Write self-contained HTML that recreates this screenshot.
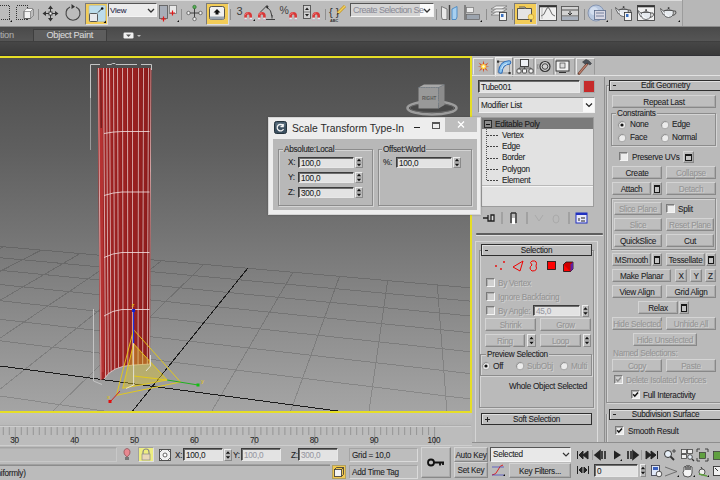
<!DOCTYPE html><html><head><meta charset="utf-8"><style>
*{margin:0;padding:0;box-sizing:border-box}
html,body{width:720px;height:480px;overflow:hidden;background:#bbbbbb;font-family:"Liberation Sans",sans-serif}
div,span,svg{position:absolute}
.t{font-size:8.2px;line-height:9px;letter-spacing:-0.25px;color:#1e1e26;white-space:nowrap;-webkit-text-stroke:0.08px #1e1e26}
.g{color:#959595;-webkit-text-stroke:0.1px #959595;text-shadow:1px 1px 0 #d2d2d2}
.g2{color:#9a9aa4;-webkit-text-stroke:0.1px #9a9aa4}
.btn{background:#bebebe;border:1px solid;border-color:#d4d4d4 #888888 #888888 #d4d4d4;box-shadow:inset -1px -1px 0 #aaaaaa}
.fld{background:#e3e3e3;border:1px solid;border-color:#3c3c3c #e8e8e8 #e8e8e8 #3c3c3c;box-shadow:inset 1px 1px 0 #6e6e6e}
.grp{border:1px solid;border-color:#8e8e8e #d4d4d4 #d4d4d4 #8e8e8e;box-shadow:1px 1px 0 #8e8e8e inset, 1px 1px 0 #d4d4d4}
</style></head><body>
<div style="left:0;top:0;width:720px;height:27px;background:#bcbcbc"></div>
<div style="left:0;top:0;width:682px;height:1px;background:#dcdcdc"></div>
<div style="left:682px;top:0;width:1px;height:26px;background:#9c9c9c"></div>
<div style="left:683px;top:0;width:37px;height:26px;background:#b7b7b7"></div>
<div style="left:0;top:26px;width:720px;height:1px;background:#8a8a8a"></div>
<div style="left:85px;top:3px;width:23px;height:22px;background:#f2cc58;border:1px solid #7a7a7a;border-bottom:1.5px solid #dedede;border-right:1px solid #dedede"></div>
<div style="left:206px;top:3px;width:23px;height:22px;background:#f2cc58;border:1px solid #7a7a7a;border-bottom:1.5px solid #dedede;border-right:1px solid #dedede"></div>
<div style="left:514px;top:3px;width:23px;height:22px;background:#f2cc58;border:1px solid #7a7a7a;border-bottom:1.5px solid #dedede;border-right:1px solid #dedede"></div>
<div style="left:108px;top:3px;width:49px;height:14px;background:#ececec;border:1px solid;border-color:#555 #f4f4f4 #f4f4f4 #555"></div>
<span class="t" style="left:110px;top:6.0px;font-size:8px;color:#2a2a50">View</span>
<svg style="left:147px;top:8px" width="8" height="6"><path d="M1 1L4 4L7 1" stroke="#333" stroke-width="1.3" fill="none"/></svg>
<div style="left:350px;top:3px;width:84px;height:14px;background:#d4d4d4;border:1px solid;border-color:#555 #f4f4f4 #f4f4f4 #555"></div>
<div style="left:420px;top:4px;width:13px;height:12px;background:#fafafa"></div>
<span class="t" style="left:353px;top:5.699999999999999px;font-size:9px;letter-spacing:-0.5px;color:#8c8c98;-webkit-text-stroke:0.05px #8c8c98">Create Selection Se</span>
<svg style="left:423px;top:8px" width="8" height="6"><path d="M1 1L4 4L7 1" stroke="#333" stroke-width="1.3" fill="none"/></svg>
<svg style="left:0;top:0" width="720" height="27"><path d="M38.5 9V20" stroke="#8e8e8e" stroke-width="1"/><path d="M181.5 9V20" stroke="#8e8e8e" stroke-width="1"/><path d="M230.5 9V20" stroke="#8e8e8e" stroke-width="1"/><path d="M325.5 9V20" stroke="#8e8e8e" stroke-width="1"/><path d="M436.5 9V20" stroke="#8e8e8e" stroke-width="1"/><path d="M486.5 9V20" stroke="#8e8e8e" stroke-width="1"/><path d="M512.5 9V20" stroke="#8e8e8e" stroke-width="1"/><path d="M584.5 9V20" stroke="#8e8e8e" stroke-width="1"/><path d="M611.5 9V20" stroke="#8e8e8e" stroke-width="1"/><rect x="-0.5" y="5.5" width="10" height="14" fill="none" stroke="#333" stroke-width="1" stroke-dasharray="1 1" shape-rendering="crispEdges"/><path d="M10 22L12 20V22Z" fill="#111"/><rect x="16.5" y="5.5" width="11" height="14" fill="none" stroke="#333" stroke-width="1" stroke-dasharray="1 1" shape-rendering="crispEdges"/><path d="M24 11.5L26.5 9H33V16L30.5 18.5H24Z" fill="#f2f2f2" stroke="#505050" stroke-width="0.9"/><path d="M30.5 11.5L33 9V16L30.5 18.5Z" fill="#bdbdbd"/><path d="M24 11.5L26.5 9H33L30.5 11.5Z" fill="#fafafa"/><path d="M24 11.5H30.5V18.5M30.5 11.5L33 9" stroke="#666" stroke-width="0.6" fill="none"/><g transform="translate(50.5,13.5)"><path d="M0 -5V5M-5 0H5" stroke="#333" stroke-width="1"/><path d="M0 -8L-2.5 -4.5H2.5ZM0 8L-2.5 4.5H2.5ZM-8 0L-4.5 -2.5V2.5ZM8 0L4.5 -2.5V2.5Z" fill="#333"/><rect x="-1.5" y="-1.5" width="3" height="3" fill="#fff" stroke="#333" stroke-width="0.9"/></g><path d="M76 7A7 7 0 1 1 70 7" stroke="#444" stroke-width="1.1" fill="none"/><path d="M71.5 4L75 6.8L71.5 9Z" fill="#333"/><rect x="89" y="5.5" width="16.5" height="16" rx="1" fill="#bcdcec" stroke="#9ab8c8" stroke-width="0.5"/><rect x="89.5" y="13.5" width="8" height="8" rx="0.8" fill="#e8e8ec" stroke="#4a4a4a" stroke-width="0.9"/><path d="M98 12.5L102 8.5" stroke="#222" stroke-width="0.9"/><circle cx="102.2" cy="8.5" r="1.3" fill="#111"/><path d="M103.5 23L106 20.5V23Z" fill="#111"/><rect x="159.5" y="5.5" width="8" height="13" fill="#a8aeb8" stroke="#555" stroke-width="0.8"/><rect x="169.5" y="5.5" width="7" height="8" fill="#e8e8e8" stroke="#777" stroke-width="0.8"/><path d="M163.5 16.5V21.5M161 19H166M172.5 10.5V15.5M170 13H175" stroke="#e01818" stroke-width="1.2"/><path d="M177 22L179 20V22Z" fill="#111"/><path d="M194.5 7V19M188.5 13H200.5" stroke="#333" stroke-width="0.9"/><circle cx="194.5" cy="7" r="1.7" fill="#5ab05a" stroke="#2a702a" stroke-width="0.7"/><circle cx="188.5" cy="13" r="1.7" fill="#f4f4f4" stroke="#444" stroke-width="0.7"/><circle cx="200.5" cy="13" r="1.7" fill="#f4f4f4" stroke="#444" stroke-width="0.7"/><circle cx="194.5" cy="19" r="1.7" fill="#f4f4f4" stroke="#444" stroke-width="0.7"/><rect x="209.5" y="6.5" width="15" height="13" rx="2" fill="#f0f0f0" stroke="#444" stroke-width="0.9"/><rect x="210" y="16.5" width="14" height="3" fill="#9aa4b0"/><path d="M217 9L213.5 12.5H215.5V14.5H218.5V12.5H220.5Z" fill="#111"/><text x="236.5" y="14.5" font-size="11" fill="#404040" font-family="Liberation Sans">3</text><path d="M244.3 20.3V15.8A3.85 3.85 0 0 1 252.0 15.8V20.3H249.4V15.8A1.25 1.25 0 0 0 246.9 15.8V20.3Z" fill="#d83838"/><path d="M245.10000000000002 15A3 3 0 0 1 248.3 12.9" stroke="#f08080" stroke-width="0.8" fill="none"/><rect x="244.3" y="17.6" width="2.6" height="2.7" fill="#e8ecf0"/><rect x="249.4" y="17.6" width="2.6" height="2.7" fill="#e8ecf0"/><rect x="244.3" y="19.3" width="2.6" height="1" fill="#a8b0c0"/><rect x="249.4" y="19.3" width="2.6" height="1" fill="#a8b0c0"/><path d="M253 21L255 19V21Z" fill="#111"/><path d="M260.5 12L267.5 5M267 7Q271.5 10 272 16.5M266 19.5H275M272 15V18.5" stroke="#333" stroke-width="0.9" fill="none"/><path d="M265.5 6.5L268.5 6L267.5 9Z" fill="#222"/><path d="M258 20.3V15.8A3.85 3.85 0 0 1 265.7 15.8V20.3H263.1V15.8A1.25 1.25 0 0 0 260.6 15.8V20.3Z" fill="#d83838"/><path d="M258.8 15A3 3 0 0 1 262 12.9" stroke="#f08080" stroke-width="0.8" fill="none"/><rect x="258" y="17.6" width="2.6" height="2.7" fill="#e8ecf0"/><rect x="263.1" y="17.6" width="2.6" height="2.7" fill="#e8ecf0"/><rect x="258" y="19.3" width="2.6" height="1" fill="#a8b0c0"/><rect x="263.1" y="19.3" width="2.6" height="1" fill="#a8b0c0"/><text x="279.5" y="13.5" font-size="10.5" fill="#404040" font-family="Liberation Sans">%</text><path d="M289.3 20.3V15.8A3.85 3.85 0 0 1 297.0 15.8V20.3H294.40000000000003V15.8A1.25 1.25 0 0 0 291.90000000000003 15.8V20.3Z" fill="#d83838"/><path d="M290.1 15A3 3 0 0 1 293.3 12.9" stroke="#f08080" stroke-width="0.8" fill="none"/><rect x="289.3" y="17.6" width="2.6" height="2.7" fill="#e8ecf0"/><rect x="294.40000000000003" y="17.6" width="2.6" height="2.7" fill="#e8ecf0"/><rect x="289.3" y="19.3" width="2.6" height="1" fill="#a8b0c0"/><rect x="294.40000000000003" y="19.3" width="2.6" height="1" fill="#a8b0c0"/><rect x="303.5" y="5.5" width="7" height="13" fill="#d2d2d2" stroke="#444" stroke-width="0.8"/><path d="M305 10L307 7.5L309 10ZM305 14L307 16.5L309 14Z" fill="#222"/><path d="M303.5 12H310.5" stroke="#444" stroke-width="0.6"/><path d="M312.3 20.3V15.8A3.85 3.85 0 0 1 320.0 15.8V20.3H317.40000000000003V15.8A1.25 1.25 0 0 0 314.90000000000003 15.8V20.3Z" fill="#d83838"/><path d="M313.1 15A3 3 0 0 1 316.3 12.9" stroke="#f08080" stroke-width="0.8" fill="none"/><rect x="312.3" y="17.6" width="2.6" height="2.7" fill="#e8ecf0"/><rect x="317.40000000000003" y="17.6" width="2.6" height="2.7" fill="#e8ecf0"/><rect x="312.3" y="19.3" width="2.6" height="1" fill="#a8b0c0"/><rect x="317.40000000000003" y="19.3" width="2.6" height="1" fill="#a8b0c0"/><text x="329" y="16" font-size="11" fill="#333" font-family="Liberation Sans">{ }</text><path d="M338 13L345 6" stroke="#c89820" stroke-width="3"/><path d="M338 13L345 6" stroke="#f0d060" stroke-width="1.5"/><path d="M336.5 14.5L338 13L339 14Z" fill="#222"/><text x="330" y="21.5" font-size="3.8" fill="#333" font-family="Liberation Sans" font-weight="bold">ABC</text><path d="M441.5 6.5L447 9V19.5H442.5L441.5 17Z" fill="#e8e8e8" stroke="#666" stroke-width="0.8"/><path d="M449.5 5V20" stroke="#444" stroke-width="1.4"/><path d="M457 6.5L452 9V19.5H456L457 17Z" fill="#a8d0f0" stroke="#3a80c0" stroke-width="0.8"/><path d="M465 5V20" stroke="#444" stroke-width="1"/><rect x="466.5" y="7.5" width="7" height="5" fill="#ececec" stroke="#777" stroke-width="0.7"/><rect x="466.5" y="14.5" width="13" height="5" fill="#9ca4ae" stroke="#666" stroke-width="0.7"/><path d="M480 22L482 20V22Z" fill="#111"/><path d="M491 9L496 6H507L502 9Z" fill="#f0f0f0" stroke="#666" stroke-width="0.6"/><path d="M491 12L496 9H507L502 12Z" fill="#f0f0f0" stroke="#666" stroke-width="0.6"/><path d="M491 15L496 12H505L500 15Z" fill="#f0f0f0" stroke="#666" stroke-width="0.6"/><rect x="499.5" y="12.5" width="7" height="8" fill="#f4f4f4" stroke="#333" stroke-width="0.8"/><rect x="501" y="14" width="2.5" height="3" fill="#3a70c0"/><path d="M517.5 8.5H531.5V19.5H517.5Z" fill="#e4e4e4" stroke="#444" stroke-width="0.9"/><path d="M519 7H525L526 8.5" stroke="#444" stroke-width="0.8" fill="#ccc"/><circle cx="531" cy="17" r="2.8" fill="#f8e070" stroke="#d0a030" stroke-width="0.7"/><rect x="530" y="19.5" width="2" height="2.5" fill="#666"/><rect x="539.5" y="5.5" width="17" height="15" fill="#f0f0f0" stroke="#444" stroke-width="0.9"/><rect x="539.5" y="5.5" width="17" height="1.8" fill="#333"/><path d="M541 16Q544 16 546 10Q548 5 550 10Q552 16 555 16" stroke="#444" stroke-width="0.8" fill="none"/><path d="M542 8V19" stroke="#999" stroke-width="0.6"/><rect x="561.5" y="6.5" width="17" height="14" fill="#d2d2d2" stroke="#555" stroke-width="0.9"/><path d="M562 10H578M562 16H578" stroke="#444" stroke-width="0.9"/><rect x="562" y="16.5" width="16" height="3.5" fill="#a8b0bc"/><path d="M570 11V14M568 13L570 15L572 13" stroke="#222" stroke-width="0.9" fill="none"/><circle cx="596" cy="13" r="8" fill="#b8c8e0" stroke="#7a8aa8" stroke-width="0.8"/><circle cx="594" cy="11" r="4" fill="#e4ecf8" opacity="0.6"/><rect x="594.5" y="10.5" width="11" height="9" fill="#d8d8e4" stroke="#5a6a88" stroke-width="0.8"/><path d="M596 13H604M596 16H604" stroke="#5a6a88" stroke-width="0.8"/><path d="M606 22L608 20V22Z" fill="#111"/><g transform="translate(615,5) scale(1)"><path d="M4 4.5Q2.5 11 8.5 11.5Q14.5 11 13 4.5Z" fill="#e6eaee" stroke="#4a4a4a" stroke-width="0.8"/><path d="M4.5 6L0.5 2.5L1 4.5L3.5 9" stroke="#4a4a4a" stroke-width="0.8" fill="#e6eaee"/><path d="M13 5Q16.5 4 16 7Q15.5 9 12.5 9.5" stroke="#4a4a4a" stroke-width="0.9" fill="none"/><path d="M5 4.5Q8.5 2 12 4.5Z" fill="#d8dce0" stroke="#4a4a4a" stroke-width="0.7"/><rect x="7.8" y="1.3" width="1.6" height="1.6" fill="#333"/><path d="M5 7Q6 10 9 10.5" stroke="#fff" stroke-width="1" fill="none" opacity="0.8"/></g><rect x="624.5" y="12.5" width="7" height="8" fill="#f4f4f4" stroke="#333" stroke-width="0.8"/><rect x="626" y="14" width="2.5" height="3" fill="#3a70c0"/><rect x="637.5" y="5.5" width="17" height="15" fill="#f0f0f0" stroke="#444" stroke-width="0.9"/><rect x="637.5" y="5.5" width="17" height="1.8" fill="#333"/><g transform="translate(637.5,8) scale(1)"><path d="M4 4.5Q2.5 11 8.5 11.5Q14.5 11 13 4.5Z" fill="#e6eaee" stroke="#4a4a4a" stroke-width="0.8"/><path d="M4.5 6L0.5 2.5L1 4.5L3.5 9" stroke="#4a4a4a" stroke-width="0.8" fill="#e6eaee"/><path d="M13 5Q16.5 4 16 7Q15.5 9 12.5 9.5" stroke="#4a4a4a" stroke-width="0.9" fill="none"/><path d="M5 4.5Q8.5 2 12 4.5Z" fill="#d8dce0" stroke="#4a4a4a" stroke-width="0.7"/><rect x="7.8" y="1.3" width="1.6" height="1.6" fill="#333"/><path d="M5 7Q6 10 9 10.5" stroke="#fff" stroke-width="1" fill="none" opacity="0.8"/></g><g transform="translate(660,6) scale(1)"><path d="M4 4.5Q2.5 11 8.5 11.5Q14.5 11 13 4.5Z" fill="#e6eaee" stroke="#4a4a4a" stroke-width="0.8"/><path d="M4.5 6L0.5 2.5L1 4.5L3.5 9" stroke="#4a4a4a" stroke-width="0.8" fill="#e6eaee"/><path d="M13 5Q16.5 4 16 7Q15.5 9 12.5 9.5" stroke="#4a4a4a" stroke-width="0.9" fill="none"/><path d="M5 4.5Q8.5 2 12 4.5Z" fill="#d8dce0" stroke="#4a4a4a" stroke-width="0.7"/><rect x="7.8" y="1.3" width="1.6" height="1.6" fill="#333"/><path d="M5 7Q6 10 9 10.5" stroke="#fff" stroke-width="1" fill="none" opacity="0.8"/></g><path d="M678 22L680 20V22Z" fill="#111"/></svg>
<div style="left:0px;top:27px;width:720px;height:14px;background:linear-gradient(#4a4a4a,#555555)"></div>
<div style="left:33px;top:29px;width:74px;height:12px;background:#5d5d5d;border:1px solid #3e3e3e;border-bottom:none"></div>
<span class="t" style="left:-4.5px;top:30.5px;color:#aaaaaa;font-size:9.2px;letter-spacing:-0.2px;-webkit-text-stroke:0.1px #aaaaaa">ction</span>
<span class="t" style="left:46.5px;top:30.5px;color:#d8d8d8;font-size:9.2px;letter-spacing:-0.3px;-webkit-text-stroke:0.1px #d8d8d8">Object Paint</span>
<svg style="left:122px;top:31px" width="20" height="9"><rect x="1.5" y="1.5" width="10" height="6" rx="1.2" fill="#f0f0f0"/><path d="M4 3.5H9L6.5 6Z" fill="#555"/><path d="M15 4H19L17 6Z" fill="#bdbdbd"/></svg>
<div style="left:41px;top:41px;width:720px;height:0px;"></div>
<div style="left:0px;top:41px;width:720px;height:15px;background:linear-gradient(#3a3a3a,#464646 8%,#3a3a3a 92%,#2c2c34)"></div>
<div style="left:0px;top:56px;width:472px;height:357px;background:#e6de26"></div>
<svg width="470" height="353" viewBox="0 58 470 353" style="left:0;top:58px">
<defs><linearGradient id="vg" x1="0" y1="0" x2="0" y2="1"><stop offset="0" stop-color="#4d4d4d"/><stop offset="0.025" stop-color="#4f4f4f"/><stop offset="0.26" stop-color="#5f5f5f"/><stop offset="0.487" stop-color="#737373"/><stop offset="0.6" stop-color="#7e7e7e"/><stop offset="0.949" stop-color="#a0a0a0"/><stop offset="1" stop-color="#a4a4a4"/></linearGradient></defs>
<rect x="0" y="58" width="470" height="353" fill="url(#vg)"/>
<path d="M-33.4 243.5L-849.5 583.1M3.4 246.8L-776.9 606.2M41.2 250.1L-698.2 631.2M80.1 253.5L-612.6 658.4M120.2 257.1L-519.1 688.2M161.4 260.7L-416.5 720.8M203.9 264.4L-303.5 756.7M292.9 272.3L-39.1 840.7M339.5 276.4L116.8 890.3M387.6 280.6L292.6 946.1M437.3 285.0L492.4 1009.6M488.7 289.5L721.4 1082.4M541.8 294.2L986.5 1166.7M596.7 299.0L1297.0 1265.4M-849.5 583.1L1297.0 1265.4M-704.8 522.9L1103.6 998.5M-589.7 475.1L980.1 828.1M-496.0 436.1L894.4 709.8M-418.2 403.7L831.4 622.9M-352.6 376.4L783.2 556.4M-296.6 353.1L745.1 503.8M-205.7 315.3L688.7 426.0M-168.4 299.8L667.2 396.4M-135.3 286.0L649.0 371.2M-105.8 273.7L633.2 349.4M-79.2 262.6L619.5 330.5M-55.2 252.6L607.4 313.8M-33.4 243.5L596.7 299.0" stroke="#000" stroke-width="1" fill="none" opacity="0.15" shape-rendering="crispEdges"/>
<path d="M247.7 268.3L-178.4 796.4M-248.1 332.9L714.2 461.2" stroke="#1c1c1c" stroke-width="1" fill="none" shape-rendering="crispEdges"/>
<defs><linearGradient id="tg" x1="0" y1="0" x2="1" y2="0"><stop offset="0" stop-color="#a82828"/><stop offset="0.3" stop-color="#9e2222"/><stop offset="0.7" stop-color="#982020"/><stop offset="1" stop-color="#8c1c1c"/></linearGradient></defs>
<clipPath id="tc"><path d="M97.5 68L151.5 68L150 364L133 365Q112 366 104 379L100 380Z"/></clipPath>
<path d="M97.5 68L151.5 68L150 364L133 365Q112 366 104 379L100 380Z" fill="url(#tg)"/>
<g clip-path="url(#tc)">
<path d="M102.3 68L103.3 68L105.4 372L104.4 372ZM105.3 68L106.3 68L108.1 372L107.2 372ZM108.3 68L109.3 68L110.9 372L110.0 372ZM112.3 68L113.3 68L114.6 372L113.7 372ZM116.3 68L117.3 68L118.3 372L117.4 372ZM121.3 68L122.3 68L123.0 372L122.0 372ZM126.3 68L127.3 68L127.6 372L126.7 372ZM131.3 68L132.3 68L132.2 372L131.3 372ZM137.3 68L138.3 68L137.8 372L136.9 372ZM142.3 68L143.3 68L142.4 372L141.5 372ZM147.3 68L148.3 68L147.0 372L146.1 372ZM149.8 68L150.8 68L149.4 372L148.4 372Z" fill="#6a0c0c" opacity="0.35"/>
<path d="M99.5 68H102.5L104 372H101Z" fill="#c03a3a" opacity="0.6"/>
<path d="M100 70H101.5L102 128H100.5Z" fill="#3a0808" opacity="0.5"/>
<path d="M98.5 68L100.9 380M103.5 68L105.6 380M106.5 68L108.3 380M109.5 68L111.1 380M113.5 68L114.8 380M117.5 68L118.5 380M122.5 68L123.1 380M127.5 68L127.8 380M132.5 68L132.4 380M138.5 68L138.0 380M143.5 68L142.6 380M148.5 68L147.2 380M151.0 68L149.5 380" stroke="#f0d8d8" stroke-width="0.85" opacity="0.85" fill="none"/>
<path d="M104 133.5L113 132.1L122 131.5H149.5M104 195.5L113 193.1L122 192H149.5M104 257.5L113 254.0L122 252.5H149.5M104 316.0L113 311.4L122 309.5H149.5M97.5 67.5H112L114 65.5H136.5L137.5 67.5H151" stroke="#f4e4e4" stroke-width="0.85" fill="none" opacity="0.95"/>
</g>
<path d="M104 379Q112 366 133 365L150 364" stroke="#f4e0e0" stroke-width="0.9" fill="none" opacity="0.7"/>
<path d="M90.5 98V64.5H100M107 64.5H111L112.5 63.5H115L116 64.5H137M141 64.5H151.5V70M93.5 309V381L102 384.5" stroke="#c4c4c4" stroke-width="1" fill="none"/>
<path d="M90.5 98V150" stroke="#999" stroke-width="1"/>
<path d="M133.6 343.8L122.7 388.3L167.2 380Z" fill="#e0c830" opacity="0.42"/>
<path d="M133.6 329.7L116.4 395.3L180.5 382ZM133.6 343.8L122.7 388.3L167.2 380ZM133.6 376L167.2 380" stroke="#e8cc10" stroke-width="0.9" fill="none"/>
<path d="M133.6 343V385L126 388.5M150.5 355V366L146 371" stroke="#f0f0f0" stroke-width="0.9" fill="none" opacity="0.85"/>
<path d="M133.6 310V343" stroke="#2030e0" stroke-width="1.2"/><rect x="132.1" y="309" width="3" height="3" fill="#1020d0"/>
<path d="M120 391L110 402" stroke="#d02020" stroke-width="1"/>
<path d="M167.2 380L198 385" stroke="#20b020" stroke-width="1"/>
<rect x="108.5" y="400" width="3" height="3" fill="#e01010"/>
<rect x="196.5" y="383.5" width="3" height="3" fill="#10c010"/>
<text x="131.5" y="307" font-size="6" fill="#e8c800" font-family="Liberation Sans">z</text>
<text x="107" y="399" font-size="6" fill="#e8c800" font-family="Liberation Sans">x</text>
<text x="201" y="383" font-size="6" fill="#e8c800" font-family="Liberation Sans">y</text>
<ellipse cx="432" cy="108" rx="24.5" ry="6.5" fill="#474747" stroke="#9c9c9c" stroke-width="2.6"/>
<ellipse cx="432" cy="108" rx="22" ry="4.5" fill="none" stroke="#707070" stroke-width="0.8"/>
<path d="M418.5 87.5L424 84.5H444.5L438.5 87.5Z" fill="#a8a8a8"/>
<path d="M418.5 87.5H438.5V108.5H418.5Z" fill="#999"/>
<path d="M438.5 87.5L444.5 84.5V105L438.5 108.5Z" fill="#8c8c8c"/>
<path d="M418.5 87.5H438.5V108.5M438.5 87.5L444.5 84.5" stroke="#6a7888" stroke-width="0.6" stroke-dasharray="1.5 1" fill="none"/>
<text x="422" y="99.5" font-size="4.6" fill="#5a5a5a" font-family="Liberation Sans" font-weight="bold">RIGHT</text>
</svg>
<div style="left:472px;top:56px;width:248px;height:387px;background:#bababa"></div>
<div style="left:473px;top:58px;width:21px;height:17px;background:#b8b8b8;border:1px solid;border-color:#e8e8e8 #9a9a9a #bababa #e8e8e8"></div>
<div style="left:495px;top:57px;width:18px;height:20px;background:#d2d2d2;border:1px solid;border-color:#f0f0f0 #8a8a8a #bababa #f0f0f0"></div>
<div style="left:514px;top:58px;width:20px;height:17px;background:#b8b8b8;border:1px solid;border-color:#e8e8e8 #9a9a9a #bababa #e8e8e8"></div>
<div style="left:535px;top:58px;width:19px;height:17px;background:#b8b8b8;border:1px solid;border-color:#e8e8e8 #9a9a9a #bababa #e8e8e8"></div>
<div style="left:555px;top:58px;width:20px;height:17px;background:#b8b8b8;border:1px solid;border-color:#e8e8e8 #9a9a9a #bababa #e8e8e8"></div>
<div style="left:576px;top:58px;width:19px;height:17px;background:#b8b8b8;border:1px solid;border-color:#e8e8e8 #9a9a9a #bababa #e8e8e8"></div>
<svg style="left:473px;top:58px" width="122" height="18"><g transform="translate(10.5,8.5)"><path d="M0 -6L1 -1.5L5 -4L2 0L6 0L2 1L4.5 5L0.8 2L0 6L-0.8 2L-4.5 5L-2 1L-6 0L-2 0L-5 -4L-1 -1.5Z" fill="#d84a20"/><circle r="2.6" fill="#ffd040"/><circle r="1.2" fill="#fffbe0"/></g><path d="M25 3.5H36.5V15H25Z" stroke="#8a8a8a" stroke-width="0.8" fill="none"/><rect x="24" y="2.5" width="2.2" height="2.2" fill="#333"/><rect x="35.5" y="14" width="2.2" height="2.2" fill="#333"/><path d="M27.5 13.5Q28 5 36 4.5" stroke="#2f6cb8" stroke-width="4.6" fill="none" stroke-linecap="round"/><path d="M27.5 13.5Q28 5 36 4.5" stroke="#8cc4ee" stroke-width="2.6" fill="none" stroke-linecap="round"/><path d="M28.6 11Q29.5 6.5 34 5.6" stroke="#e0f0fc" stroke-width="0.9" fill="none"/><rect x="47.5" y="1.5" width="8" height="7" fill="#eef0f4" stroke="#333" stroke-width="0.9"/><path d="M51.5 8.5V10M46 10H58M46 10V11M51.5 10V11M58 10V11" stroke="#444" stroke-width="0.7" fill="none"/><rect x="44" y="11" width="4" height="4" rx="1" fill="#f4f4f4" stroke="#333" stroke-width="0.8"/><rect x="49.5" y="11" width="4" height="4" rx="1" fill="#f4f4f4" stroke="#333" stroke-width="0.8"/><rect x="56" y="11" width="4" height="4" rx="1" fill="#f4f4f4" stroke="#333" stroke-width="0.8"/><circle cx="72" cy="8.5" r="5" fill="#cfcfcf" stroke="#333" stroke-width="1.2"/><circle cx="72" cy="8.5" r="2.8" fill="none" stroke="#333" stroke-width="0.9"/><path d="M65 6Q64 8.5 65 11" stroke="#888" fill="none"/><rect x="83" y="3" width="13" height="10" fill="#f2f2f2" stroke="#333" stroke-width="1"/><rect x="87" y="5" width="5" height="5" fill="#ddd" stroke="#444" stroke-width="0.7"/><path d="M86 14.5H93" stroke="#333" stroke-width="1"/><path d="M106 15.5L114 6" stroke="#6a4030" stroke-width="2.6" stroke-linecap="round"/><path d="M106 15.5L114 6" stroke="#c08070" stroke-width="1.2"/><path d="M109.5 4L113 1.5Q116 2 118.5 5.5L117 7L114 5L112.5 6.5Z" fill="#4a5058" stroke="#333" stroke-width="0.5"/></svg>
<div style="left:472px;top:75px;width:248px;height:1px;background:#e2e2e2"></div>
<div class="fld" style="left:478px;top:80px;width:102px;height:13px;"></div><span class="t" style="left:481px;top:82.8px;">Tube001</span>
<div style="left:583px;top:80px;width:12px;height:13px;background:#c62a2a;border:1px solid #a8a8a8"></div>
<div style="left:478px;top:97px;width:117px;height:16px;background:#e2e2e2;border:1px solid;border-color:#8c8c8c #f0f0f0 #f0f0f0 #8c8c8c"></div>
<div style="left:583px;top:98px;width:11px;height:14px;background:#f8f8f8"></div>
<svg style="left:585px;top:102px" width="8" height="6"><path d="M1 1.5L4 4.5L7 1.5" stroke="#222" stroke-width="1.2" fill="none"/></svg>
<span class="t" style="left:481px;top:101.0px;">Modifier List</span>
<div style="left:481px;top:117px;width:113px;height:90px;background:#e2e2e2;border:1px solid #9c9c9c"></div>
<div style="left:482px;top:118px;width:111px;height:11px;background:#7b7b7b"></div>
<div style="left:484px;top:120px;width:8px;height:8px;border:1px solid #2a2a2a;background:#8c8c8c"></div><div style="left:486px;top:123.5px;width:4px;height:1px;background:#111"></div>
<span class="t" style="left:495px;top:119.8px;color:#1a1a1a;-webkit-text-stroke:0.1px #1a1a1a">Editable Poly</span>
<span class="t" style="left:502px;top:130.7px;">Vertex</span>
<span class="t" style="left:502px;top:142.0px;">Edge</span>
<span class="t" style="left:502px;top:153.29999999999998px;">Border</span>
<span class="t" style="left:502px;top:164.6px;">Polygon</span>
<span class="t" style="left:502px;top:175.89999999999998px;">Element</span>
<svg style="left:480px;top:128px" width="22" height="56"><path d="M6.5 1V52.5" stroke="#555" stroke-width="1" stroke-dasharray="1 1" shape-rendering="crispEdges"/><path d="M7 7.5H19M7 18.5H19M7 30.5H19M7 41.5H19M7 52.5H19" stroke="#444" stroke-width="1" stroke-dasharray="2 1" shape-rendering="crispEdges"/></svg>
<div style="left:482px;top:185px;width:111px;height:1px;background:#b8b8b8"></div><div style="left:482px;top:186px;width:111px;height:1px;background:#f4f4f4"></div>
<svg style="left:480px;top:210px" width="112" height="16"><path d="M3 8H8M8 5V11H11V5H14V11H8" stroke="#222" stroke-width="1.3" fill="#ddd"/><path d="M22 2V14" stroke="#888" stroke-width="1"/><path d="M31 3V13M36 3V13M31 3H36" stroke="#333" stroke-width="1.4" fill="none"/><rect x="32" y="8" width="3" height="6" fill="#fff"/><path d="M47 2V14" stroke="#888" stroke-width="1"/><path d="M55 5L59 11L63 5" stroke="#aaa" stroke-width="1" fill="none"/><ellipse cx="76" cy="9" rx="3" ry="4" stroke="#aaa" fill="none"/><path d="M89 2V14" stroke="#888" stroke-width="1"/><rect x="96" y="3" width="11" height="10" fill="#e8e8f8" stroke="#2030c0" stroke-width="1"/><rect x="96" y="3" width="11" height="2" fill="#2030c0"/><path d="M99 8V11M101 8H105M101 11H105" stroke="#222" stroke-width="1"/></svg>
<div style="left:476px;top:233px;width:127px;height:2px;background:#5e5e5e;border-radius:1px"></div><div style="left:476px;top:235px;width:127px;height:1px;background:#e0e0e0"></div>
<div style="left:475px;top:241px;width:123px;height:202px;border:1px solid;border-color:#d4d4d4 #dcdcdc #bababa #d4d4d4"></div>
<div style="left:479px;top:250px;width:115px;height:158px;border:1px solid #8e8e8e;box-shadow:inset 1px 1px 0 #d4d4d4, 1px 1px 0 #d4d4d4"></div>
<div style="left:481px;top:244px;width:111px;height:12px;background:#bdbdbd;border:1px solid #2e2e2e;box-shadow:inset 1px 1px 0 #e0e0e0"></div><span class="t" style="left:481px;width:111px;top:245.5px;text-align:center;">Selection</span><div style="left:485px;top:249.5px;width:3px;height:1px;background:#222"></div>
<svg style="left:490px;top:258px" width="90" height="16"><circle cx="6" cy="8" r="0.9" fill="#e00"/><circle cx="14" cy="4" r="0.9" fill="#e00"/><circle cx="11" cy="11" r="0.9" fill="#e00"/><path d="M23 9L33 3L30 13Z" stroke="#e00" stroke-width="1" fill="none"/><path d="M42 3Q48 2 46 8Q48 13 42 13Q38 10 42 7Q39 4 42 3Z" stroke="#e00" stroke-width="1" fill="none"/><rect x="57.5" y="3.5" width="8" height="8" fill="#f00" stroke="#111" stroke-width="0.8"/><path d="M73.5 6.5H80.5V13.5H73.5Z" fill="#f00" stroke="#111" stroke-width="0.8"/><path d="M73.5 6.5L76 4H83V11L80.5 13.5" fill="#c00" stroke="#111" stroke-width="0.8"/><path d="M80.5 6.5L83 4V11L80.5 13.5Z" fill="#6020a0"/></svg>
<div style="left:486px;top:278px;width:9px;height:9px;background:#d0d0d0;border:1px solid;border-color:#7a7a7a #f4f4f4 #f4f4f4 #7a7a7a;box-shadow:inset 1px 1px 0 #b0b0b0"></div>
<span class="t g" style="left:498px;top:278.5px;">By Vertex</span>
<div style="left:486px;top:292px;width:9px;height:9px;background:#d0d0d0;border:1px solid;border-color:#7a7a7a #f4f4f4 #f4f4f4 #7a7a7a;box-shadow:inset 1px 1px 0 #b0b0b0"></div>
<span class="t g" style="left:498px;top:292.5px;">Ignore Backfacing</span>
<div style="left:486px;top:306px;width:9px;height:9px;background:#d0d0d0;border:1px solid;border-color:#7a7a7a #f4f4f4 #f4f4f4 #7a7a7a;box-shadow:inset 1px 1px 0 #b0b0b0"></div>
<span class="t g" style="left:498px;top:306.5px;">By Angle:</span>
<div class="fld" style="left:533px;top:305px;width:47px;height:11px;"></div><span class="t g2" style="left:536px;top:306.8px;">45,0</span>
<div style="left:582px;top:305px;width:7px;height:12px;background:#bdbdbd;border:1px solid;border-color:#ececec #8a8a8a #8a8a8a #ececec"></div><svg style="left:582px;top:305px" width="7" height="12"><path d="M1.3 4.8L3.5 2.2L5.7 4.8ZM1.3 7.2L3.5 9.8L5.7 7.2Z" fill="#111"/><path d="M1 6.0H6" stroke="#9a9a9a" stroke-width="0.5"/></svg>
<div class="btn" style="left:485px;top:318px;width:51px;height:13px;"></div><span class="t g" style="left:485px;width:51px;top:320.5px;text-align:center;">Shrink</span>
<div class="btn" style="left:540px;top:318px;width:51px;height:13px;"></div><span class="t g" style="left:540px;width:51px;top:320.5px;text-align:center;">Grow</span>
<div class="btn" style="left:485px;top:334px;width:40px;height:13px;"></div><span class="t g" style="left:485px;width:40px;top:336.5px;text-align:center;">Ring</span>
<div style="left:527px;top:334px;width:9px;height:13px;background:#bdbdbd;border:1px solid;border-color:#ececec #8a8a8a #8a8a8a #ececec"></div><svg style="left:527px;top:334px" width="9" height="13"><path d="M2.3 5.3L4.5 2.7L6.7 5.3ZM2.3 7.7L4.5 10.3L6.7 7.7Z" fill="#111"/><path d="M1 6.5H8" stroke="#9a9a9a" stroke-width="0.5"/></svg>
<div class="btn" style="left:540px;top:334px;width:41px;height:13px;"></div><span class="t g" style="left:540px;width:41px;top:336.5px;text-align:center;">Loop</span>
<div style="left:583px;top:334px;width:8px;height:13px;background:#bdbdbd;border:1px solid;border-color:#ececec #8a8a8a #8a8a8a #ececec"></div><svg style="left:583px;top:334px" width="8" height="13"><path d="M1.8 5.3L4.0 2.7L6.2 5.3ZM1.8 7.7L4.0 10.3L6.2 7.7Z" fill="#111"/><path d="M1 6.5H7" stroke="#9a9a9a" stroke-width="0.5"/></svg>
<div style="left:480px;top:354px;width:112px;height:22px;border:1px solid #8c8c8c;box-shadow:1px 1px 0 #d4d4d4, inset 1px 1px 0 #d4d4d4;"></div><span class="t" style="left:486px;top:349.5px;padding:0 1px;background:#bababa">Preview Selection</span>
<svg style="left:480.5px;top:361px" width="10" height="10"><circle cx="5" cy="5" r="3.8" fill="#ececec" stroke="#9a9a9a" stroke-width="0.8"/><path d="M1.8 6.5A3.8 3.8 0 0 1 6.5 1.8" stroke="#8a8a8a" stroke-width="0.9" fill="none"/><circle cx="5" cy="5" r="1.6" fill="#111"/></svg>
<span class="t" style="left:493px;top:361.5px;font-size:8.3px">Off</span>
<svg style="left:514.5px;top:361px" width="10" height="10"><circle cx="5" cy="5" r="3.8" fill="#ececec" stroke="#9a9a9a" stroke-width="0.8"/><path d="M1.8 6.5A3.8 3.8 0 0 1 6.5 1.8" stroke="#8a8a8a" stroke-width="0.9" fill="none"/></svg>
<span class="t g" style="left:527px;top:361.5px;">SubObj</span>
<svg style="left:558.5px;top:361px" width="10" height="10"><circle cx="5" cy="5" r="3.8" fill="#ececec" stroke="#9a9a9a" stroke-width="0.8"/><path d="M1.8 6.5A3.8 3.8 0 0 1 6.5 1.8" stroke="#8a8a8a" stroke-width="0.9" fill="none"/></svg>
<span class="t g" style="left:571px;top:361.5px;">Multi</span>
<span class="t" style="left:509px;top:382.0px;">Whole Object Selected</span>
<div style="left:481px;top:413px;width:111px;height:12px;background:#bdbdbd;border:1px solid #2e2e2e;box-shadow:inset 1px 1px 0 #e0e0e0"></div><span class="t" style="left:481px;width:111px;top:414.5px;text-align:center;">Soft Selection</span><div style="left:485px;top:418.5px;width:5px;height:1px;background:#222"></div><div style="left:487px;top:416.5px;width:1px;height:5px;background:#222"></div>
<div style="left:604px;top:77px;width:1px;height:366px;background:#8e8e8e"></div>
<div style="left:606px;top:85px;width:117px;height:318px;border:1px solid #8e8e8e;box-shadow:inset 1px 1px 0 #d4d4d4, 1px 1px 0 #d4d4d4"></div>
<div style="left:609px;top:80px;width:113px;height:11px;background:#bdbdbd;border:1px solid #2e2e2e;box-shadow:inset 1px 1px 0 #e0e0e0"></div><span class="t" style="left:609px;width:113px;top:81.0px;text-align:center;">Edit Geometry</span><div style="left:613px;top:85.0px;width:3px;height:1px;background:#222"></div>
<div class="btn" style="left:612px;top:95px;width:104px;height:13px;"></div><span class="t" style="left:612px;width:104px;top:97.5px;text-align:center;">Repeat Last</span>
<div style="left:611px;top:113px;width:105px;height:33px;border:1px solid #8c8c8c;box-shadow:1px 1px 0 #d4d4d4, inset 1px 1px 0 #d4d4d4;"></div><span class="t" style="left:616px;top:108.5px;padding:0 1px;background:#bababa">Constraints</span>
<svg style="left:616.5px;top:119.5px" width="10" height="10"><circle cx="5" cy="5" r="3.8" fill="#ececec" stroke="#9a9a9a" stroke-width="0.8"/><path d="M1.8 6.5A3.8 3.8 0 0 1 6.5 1.8" stroke="#8a8a8a" stroke-width="0.9" fill="none"/><circle cx="5" cy="5" r="1.6" fill="#111"/></svg>
<span class="t" style="left:630px;top:120.0px;">None</span>
<svg style="left:659.5px;top:119.5px" width="10" height="10"><circle cx="5" cy="5" r="3.8" fill="#ececec" stroke="#9a9a9a" stroke-width="0.8"/><path d="M1.8 6.5A3.8 3.8 0 0 1 6.5 1.8" stroke="#8a8a8a" stroke-width="0.9" fill="none"/></svg>
<span class="t" style="left:672px;top:120.0px;">Edge</span>
<svg style="left:616.5px;top:132.5px" width="10" height="10"><circle cx="5" cy="5" r="3.8" fill="#ececec" stroke="#9a9a9a" stroke-width="0.8"/><path d="M1.8 6.5A3.8 3.8 0 0 1 6.5 1.8" stroke="#8a8a8a" stroke-width="0.9" fill="none"/></svg>
<span class="t" style="left:630px;top:133.0px;">Face</span>
<svg style="left:659.5px;top:132.5px" width="10" height="10"><circle cx="5" cy="5" r="3.8" fill="#ececec" stroke="#9a9a9a" stroke-width="0.8"/><path d="M1.8 6.5A3.8 3.8 0 0 1 6.5 1.8" stroke="#8a8a8a" stroke-width="0.9" fill="none"/></svg>
<span class="t" style="left:672px;top:133.0px;">Normal</span>
<div style="left:619px;top:152px;width:9px;height:9px;background:#ececec;border:1px solid;border-color:#7a7a7a #f4f4f4 #f4f4f4 #7a7a7a;box-shadow:inset 1px 1px 0 #b0b0b0"></div>
<span class="t" style="left:632px;top:152.5px;">Preserve UVs</span>
<div class="btn" style="left:683px;top:151px;width:11px;height:12px"></div><div style="left:685px;top:153.5px;width:7px;height:7px;border:1px solid #181818;border-top-width:2px;background:#c4c4c4"></div>
<div class="btn" style="left:612px;top:166px;width:50px;height:13px;"></div><span class="t" style="left:612px;width:50px;top:168.5px;text-align:center;">Create</span>
<div class="btn" style="left:666px;top:166px;width:50px;height:13px;"></div><span class="t g" style="left:666px;width:50px;top:168.5px;text-align:center;">Collapse</span>
<div class="btn" style="left:612px;top:182px;width:39px;height:13px;"></div><span class="t" style="left:612px;width:39px;top:184.5px;text-align:center;">Attach</span>
<div class="btn" style="left:652px;top:182px;width:10px;height:13px"></div><div style="left:654px;top:184.5px;width:6px;height:8px;border:1px solid #181818;border-top-width:2px;background:#c4c4c4"></div>
<div class="btn" style="left:666px;top:182px;width:50px;height:13px;"></div><span class="t g" style="left:666px;width:50px;top:184.5px;text-align:center;">Detach</span>
<div style="left:611px;top:198px;width:105px;height:52px;border:1px solid #8c8c8c;box-shadow:1px 1px 0 #d4d4d4, inset 1px 1px 0 #d4d4d4;"></div>
<div class="btn" style="left:614px;top:202px;width:48px;height:13px;"></div><span class="t g" style="left:614px;width:48px;top:204.5px;text-align:center;">Slice Plane</span>
<div style="left:666px;top:204px;width:9px;height:9px;background:#ececec;border:1px solid;border-color:#7a7a7a #f4f4f4 #f4f4f4 #7a7a7a;box-shadow:inset 1px 1px 0 #b0b0b0"></div>
<span class="t" style="left:678px;top:204.5px;">Split</span>
<div class="btn" style="left:614px;top:218px;width:48px;height:13px;"></div><span class="t g" style="left:614px;width:48px;top:220.5px;text-align:center;">Slice</span>
<div class="btn" style="left:666px;top:218px;width:48px;height:13px;"></div><span class="t g" style="left:666px;width:48px;top:220.5px;text-align:center;">Reset Plane</span>
<div class="btn" style="left:614px;top:234px;width:48px;height:13px;"></div><span class="t" style="left:614px;width:48px;top:236.5px;text-align:center;">QuickSlice</span>
<div class="btn" style="left:666px;top:234px;width:48px;height:13px;"></div><span class="t" style="left:666px;width:48px;top:236.5px;text-align:center;">Cut</span>
<div class="btn" style="left:612px;top:253px;width:39px;height:13px;"></div><span class="t" style="left:612px;width:39px;top:255.5px;text-align:center;">MSmooth</span>
<div class="btn" style="left:652px;top:253px;width:10px;height:13px"></div><div style="left:654px;top:255.5px;width:6px;height:8px;border:1px solid #181818;border-top-width:2px;background:#c4c4c4"></div>
<div class="btn" style="left:666px;top:253px;width:39px;height:13px;"></div><span class="t" style="left:666px;width:39px;top:255.5px;text-align:center;">Tessellate</span>
<div class="btn" style="left:706px;top:253px;width:10px;height:13px"></div><div style="left:708px;top:255.5px;width:6px;height:8px;border:1px solid #181818;border-top-width:2px;background:#c4c4c4"></div>
<div class="btn" style="left:612px;top:269px;width:59px;height:13px;"></div><span class="t" style="left:612px;width:59px;top:271.5px;text-align:center;">Make Planar</span>
<div class="btn" style="left:675px;top:269px;width:12px;height:13px;"></div><span class="t" style="left:675px;width:12px;top:271.5px;text-align:center;">X</span>
<div class="btn" style="left:690px;top:269px;width:12px;height:13px;"></div><span class="t" style="left:690px;width:12px;top:271.5px;text-align:center;">Y</span>
<div class="btn" style="left:705px;top:269px;width:11px;height:13px;"></div><span class="t" style="left:705px;width:11px;top:271.5px;text-align:center;">Z</span>
<div class="btn" style="left:612px;top:285px;width:50px;height:13px;"></div><span class="t" style="left:612px;width:50px;top:287.5px;text-align:center;">View Align</span>
<div class="btn" style="left:666px;top:285px;width:50px;height:13px;"></div><span class="t" style="left:666px;width:50px;top:287.5px;text-align:center;">Grid Align</span>
<div class="btn" style="left:638px;top:301px;width:40px;height:13px;"></div><span class="t" style="left:638px;width:40px;top:303.5px;text-align:center;">Relax</span>
<div class="btn" style="left:679px;top:301px;width:10px;height:13px"></div><div style="left:681px;top:303.5px;width:6px;height:8px;border:1px solid #181818;border-top-width:2px;background:#c4c4c4"></div>
<div class="btn" style="left:612px;top:317px;width:50px;height:13px;"></div><span class="t g" style="left:612px;width:50px;top:319.5px;text-align:center;">Hide Selected</span>
<div class="btn" style="left:666px;top:317px;width:50px;height:13px;"></div><span class="t g" style="left:666px;width:50px;top:319.5px;text-align:center;">Unhide All</span>
<div class="btn" style="left:633px;top:333px;width:64px;height:13px;"></div><span class="t g" style="left:633px;width:64px;top:335.5px;text-align:center;">Hide Unselected</span>
<span class="t g" style="left:613px;top:348.5px;">Named Selections:</span>
<div class="btn" style="left:612px;top:359px;width:50px;height:13px;"></div><span class="t g" style="left:612px;width:50px;top:361.5px;text-align:center;">Copy</span>
<div class="btn" style="left:666px;top:359px;width:50px;height:13px;"></div><span class="t g" style="left:666px;width:50px;top:361.5px;text-align:center;">Paste</span>
<div style="left:614px;top:375px;width:9px;height:9px;background:#d0d0d0;border:1px solid;border-color:#7a7a7a #f4f4f4 #f4f4f4 #7a7a7a;box-shadow:inset 1px 1px 0 #b0b0b0"></div><svg style="left:614px;top:375px" width="9" height="9"><path d="M2.2 4.3L3.8 6.2L7 2.4" stroke="#8a8a8a" stroke-width="1.5" fill="none"/></svg>
<span class="t g" style="left:626px;top:375.5px;">Delete Isolated Vertices</span>
<div style="left:631px;top:390px;width:9px;height:9px;background:#ececec;border:1px solid;border-color:#7a7a7a #f4f4f4 #f4f4f4 #7a7a7a;box-shadow:inset 1px 1px 0 #b0b0b0"></div><svg style="left:631px;top:390px" width="9" height="9"><path d="M2.2 4.3L3.8 6.2L7 2.4" stroke="#111" stroke-width="1.5" fill="none"/></svg>
<span class="t" style="left:643px;top:390.5px;">Full Interactivity</span>
<div style="left:609px;top:409px;width:113px;height:11px;background:#bdbdbd;border:1px solid #2e2e2e;box-shadow:inset 1px 1px 0 #e0e0e0"></div><span class="t" style="left:609px;width:113px;top:410.0px;text-align:center;">Subdivision Surface</span><div style="left:613px;top:414.0px;width:3px;height:1px;background:#222"></div>
<div style="left:606px;top:414px;width:1px;height:29px;background:#8e8e8e"></div><div style="left:607px;top:414px;width:1px;height:29px;background:#d4d4d4"></div>
<div style="left:615px;top:426px;width:9px;height:9px;background:#ececec;border:1px solid;border-color:#7a7a7a #f4f4f4 #f4f4f4 #7a7a7a;box-shadow:inset 1px 1px 0 #b0b0b0"></div><svg style="left:615px;top:426px" width="9" height="9"><path d="M2.2 4.3L3.8 6.2L7 2.4" stroke="#111" stroke-width="1.5" fill="none"/></svg>
<span class="t" style="left:628px;top:426.5px;">Smooth Result</span>
<div style="left:472px;top:442px;width:248px;height:1px;background:#8e8e8e"></div>
<div style="left:0;top:413px;width:472px;height:13px;background:linear-gradient(#c0c0c0,#b8b8b8)"></div>
<div style="left:0;top:425px;width:471px;height:1px;background:#adadad"></div>
<div style="left:0;top:426px;width:471px;height:1px;background:#cdcdcd"></div>
<div style="left:0;top:427px;width:472px;height:18px;background:#bcbcbc"></div>
<svg style="left:0;top:0" width="472" height="446"><path d="M3.3 427V435M9.3 427V435M15.3 427V445M21.3 427V435M27.3 427V435M33.3 427V435M39.3 427V435M45.2 427V435M51.2 427V435M57.2 427V435M63.2 427V435M69.2 427V435M75.2 427V445M81.2 427V435M87.2 427V435M93.2 427V435M99.2 427V435M105.2 427V435M111.1 427V435M117.1 427V435M123.1 427V435M129.1 427V435M135.1 427V445M141.1 427V435M147.1 427V435M153.1 427V435M159.1 427V435M165.1 427V435M171.0 427V435M177.0 427V435M183.0 427V435M189.0 427V435M195.0 427V445M201.0 427V435M207.0 427V435M213.0 427V435M219.0 427V435M225.0 427V435M230.9 427V435M236.9 427V435M242.9 427V435M248.9 427V435M254.9 427V445M260.9 427V435M266.9 427V435M272.9 427V435M278.9 427V435M284.9 427V435M290.8 427V435M296.8 427V435M302.8 427V435M308.8 427V435M314.8 427V445M320.8 427V435M326.8 427V435M332.8 427V435M338.8 427V435M344.8 427V435M350.7 427V435M356.7 427V435M362.7 427V435M368.7 427V435M374.7 427V445M380.7 427V435M386.7 427V435M392.7 427V435M398.7 427V435M404.7 427V435M410.6 427V435M416.6 427V435M422.6 427V435M428.6 427V435M434.6 427V445" stroke="#8a8a8a" stroke-width="0.8"/></svg>
<span class="t" style="left:2.600000000000012px;width:24.0px;top:435.5px;text-align:center;color:#2a2a2a">30</span>
<span class="t" style="left:62.499999999999986px;width:24.0px;top:435.5px;text-align:center;color:#2a2a2a">40</span>
<span class="t" style="left:122.40000000000002px;width:24.000000000000014px;top:435.5px;text-align:center;color:#2a2a2a">50</span>
<span class="t" style="left:182.3px;width:24.0px;top:435.5px;text-align:center;color:#2a2a2a">60</span>
<span class="t" style="left:242.20000000000002px;width:23.99999999999997px;top:435.5px;text-align:center;color:#2a2a2a">70</span>
<span class="t" style="left:302.1px;width:24.0px;top:435.5px;text-align:center;color:#2a2a2a">80</span>
<span class="t" style="left:362.00000000000006px;width:24.0px;top:435.5px;text-align:center;color:#2a2a2a">90</span>
<span class="t" style="left:421.90000000000003px;width:24.0px;top:435.5px;text-align:center;color:#2a2a2a">100</span>
<div style="left:0;top:445px;width:472px;height:1px;background:#cecece"></div>
<div style="left:0;top:446px;width:720px;height:34px;background:#bbbbbb"></div>
<div style="left:0;top:447px;width:117px;height:15px;background:#bababa;border:1px solid;border-color:#a4a4a4 #c8c8c8 #c8c8c8 #a4a4a4;border-left:none;box-shadow:inset 0 1px 0 #b0b0b0"></div>
<div style="left:0;top:464px;width:330px;height:1px;background:#a0a0a0"></div><div style="left:0;top:465px;width:330px;height:1px;background:#8c8c8c"></div>
<span class="t" style="left:-7.8px;top:468.5px;color:#222">uniformly)</span>
<svg style="left:120px;top:447px" width="55" height="16"><path d="M7 10Q3 7 4 4Q5 1.5 7 1.5Q9 1.5 10 4Q11 7 7 10Z" fill="#e88890" stroke="#8a4a50" stroke-width="0.7"/><path d="M6 10V13M8 10V13" stroke="#333" stroke-width="1"/></svg>
<div style="left:138px;top:447px;width:16px;height:15px;background:#eeee80;border:1px solid;border-color:#a0a0a0 #e0e0e0 #e0e0e0 #a0a0a0"></div>
<svg style="left:138px;top:447px" width="16" height="15"><path d="M5 7V5A3 3 0 0 1 11 5V7" stroke="#888" stroke-width="1.2" fill="none"/><rect x="4" y="7" width="8" height="6" fill="#e8d8b8" stroke="#888" stroke-width="0.7"/></svg>
<svg style="left:159px;top:449px" width="12" height="12"><rect x="0.5" y="0.5" width="11" height="11" fill="#f0f0f0" stroke="#444" stroke-width="0.9"/><circle cx="6" cy="6" r="2" fill="#fff" stroke="#444" stroke-width="0.8"/><path d="M0.5 3.5L3.5 0.5M8.5 0.5L11.5 3.5M0.5 8.5L3.5 11.5M8.5 11.5L11.5 8.5" stroke="#444" stroke-width="0.8"/></svg>
<span class="t" style="left:175px;top:450.5px;">X:</span>
<div class="fld" style="left:183px;top:448px;width:40px;height:13px;"></div><span class="t" style="left:186px;top:450.8px;">100,0</span>
<div style="left:224px;top:449px;width:8px;height:12px;background:#bdbdbd;border:1px solid;border-color:#ececec #8a8a8a #8a8a8a #ececec"></div><svg style="left:224px;top:449px" width="8" height="12"><path d="M1.8 4.8L4.0 2.2L6.2 4.8ZM1.8 7.2L4.0 9.8L6.2 7.2Z" fill="#111"/><path d="M1 6.0H7" stroke="#9a9a9a" stroke-width="0.5"/></svg>
<span class="t" style="left:233px;top:450.5px;">Y:</span>
<div class="fld" style="left:241px;top:448px;width:40px;height:13px;"></div><span class="t g2" style="left:244px;top:450.8px;">100,0</span>
<span class="t" style="left:291px;top:450.5px;">Z:</span>
<div class="fld" style="left:298px;top:448px;width:40px;height:13px;"></div><span class="t g2" style="left:301px;top:450.8px;">300,0</span>
<div style="left:349px;top:448px;width:69px;height:14px;background:#bdbdbd;border:1px solid;border-color:#a4a4a4 #dadada #dadada #a4a4a4"></div>
<span class="t" style="left:352px;top:450.5px;">Grid = 10,0</span>
<div style="left:349px;top:465px;width:69px;height:14px;background:#bdbdbd;border:1px solid;border-color:#a4a4a4 #dadada #dadada #a4a4a4"></div>
<span class="t" style="left:352px;top:467.5px;font-size:8.2px">Add Time Tag</span>
<div style="left:332px;top:465px;width:14px;height:14px;background:#f0c850;border:1px solid #b0a060"></div>
<svg style="left:332px;top:465px" width="14" height="14"><rect x="2.5" y="4.5" width="7" height="7" fill="#f4f4f4" stroke="#333" stroke-width="0.8"/><path d="M2.5 4.5L4.5 2.5H11.5V9.5L9.5 11.5M9.5 4.5L11.5 2.5" stroke="#333" stroke-width="0.8" fill="none"/></svg>
<div class="btn" style="left:421px;top:447px;width:30px;height:31px;"></div>
<svg style="left:421px;top:447px" width="30" height="31"><circle cx="10" cy="15.5" r="3" fill="none" stroke="#111" stroke-width="1.8"/><path d="M13 15.5H23M19 15.5V18.5M22 15.5V18" stroke="#111" stroke-width="1.8"/></svg>
<div class="btn" style="left:454px;top:447px;width:34px;height:15px;font-size:8px"></div><span class="t" style="left:454px;width:34px;top:450.5px;text-align:center;">Auto Key</span>
<div class="btn" style="left:454px;top:462px;width:34px;height:16px;"></div><span class="t" style="left:454px;width:34px;top:466.0px;text-align:center;">Set Key</span>
<div style="left:490px;top:447px;width:81px;height:15px;background:#e8e8e8;border:1px solid;border-color:#555 #f4f4f4 #f4f4f4 #555"></div>
<span class="t" style="left:493px;top:450.0px;">Selected</span>
<svg style="left:562px;top:452px" width="8" height="6"><path d="M1 1L4 4L7 1" stroke="#333" stroke-width="1.2" fill="none"/></svg>
<svg style="left:491px;top:464px" width="16" height="14"><path d="M1 11Q5 11 7 6Q9 1 12 1" stroke="#e02020" stroke-width="1" fill="none"/><path d="M1 11H13M1 3H13" stroke="#4040c0" stroke-width="0.7"/><path d="M12 12L14 10V12Z" fill="#111"/></svg>
<div class="btn" style="left:509px;top:463px;width:62px;height:15px;"></div><span class="t" style="left:509px;width:62px;top:466.5px;text-align:center;">Key Filters...</span>
<svg style="left:0;top:0" width="720" height="480"><path d="M577.5 451V459M579 455L583 451V459ZM583 455L588 451V459Z" fill="#222" stroke="#222" stroke-width="1"/><path d="M592.5 450V460M641.5 450V460" stroke="#999"/><path d="M595 455L600 451V459Z M602 451V459M605 451V459" fill="#222" stroke="#222" stroke-width="1.6"/><path d="M614 450.5L621 455L614 459.5Z" fill="#222"/><path d="M620 461L622 459V461Z" fill="#111"/><path d="M628 451V459M631 451V459M633 451L638 455L633 459Z" fill="#222" stroke="#222" stroke-width="1.6"/><path d="M646 451L651 455L646 459ZM651 451L656 455L651 459ZM657.5 451V459" fill="#222" stroke="#222" stroke-width="1"/><circle cx="668" cy="454" r="3.5" fill="#e8f0f8" stroke="#333" stroke-width="1"/><path d="M670.5 456.5L674 460" stroke="#333" stroke-width="1.8"/><path d="M674 449V453M672 451H676" stroke="#333" stroke-width="0.8"/><rect x="681.5" y="449.5" width="5" height="4" fill="#f0f0f0" stroke="#444" stroke-width="0.8"/><rect x="687.5" y="449.5" width="5" height="4" fill="#f0f0f0" stroke="#444" stroke-width="0.8"/><rect x="681.5" y="454.5" width="5" height="4" fill="#f0f0f0" stroke="#444" stroke-width="0.8"/><circle cx="690" cy="457" r="2.3" fill="#e8f0f8" stroke="#333" stroke-width="0.8"/><path d="M692 459L694 461" stroke="#333" stroke-width="1.2"/><path d="M697 452V449H700M705 449H708V452M697 458V461H700M708 458V461H705" stroke="#333" stroke-width="0.9" fill="none"/><rect x="699.5" y="452.5" width="6" height="6" fill="#60a040" stroke="#333" stroke-width="0.7"/><rect x="713.5" y="451.5" width="7" height="8" fill="#60a040" stroke="#333" stroke-width="0.7"/><path d="M577.5 466V474M588.5 466V474M579 470L582 467V473ZM587 470L584 467V473Z" fill="#222" stroke="#222" stroke-width="1"/><rect x="651.5" y="465.5" width="8" height="10" fill="#e0e8f8" stroke="#334" stroke-width="0.8"/><rect x="653" y="467" width="5" height="3" fill="#3a60c0"/><circle cx="659" cy="474" r="2.8" fill="#f4f4f4" stroke="#333" stroke-width="0.8"/><path d="M665 467L677 471.5L665 476" stroke="#666" stroke-width="0.9" fill="none"/><path d="M677 477L679 475V477Z" fill="#111"/><path d="M684 476Q682 472 684 470V467Q685 466 686 467V470V466Q687 465 688 466V470V466Q689 465 690 466V470V467Q691 466 692 467V473Q692 477 688 477Z" fill="#f4f4f4" stroke="#333" stroke-width="0.8"/><path d="M693 477L695 475V477Z" fill="#111"/><path d="M701 467L704 472" stroke="#333" stroke-width="1"/><circle cx="702" cy="472" r="3" fill="#f0f0f0" stroke="#333" stroke-width="0.8"/><path d="M699 474L707 476" stroke="#60a040" stroke-width="1.5"/><path d="M707 477L709 475V477Z" fill="#111"/><rect x="713.5" y="466.5" width="8" height="9" fill="#f0f0f0" stroke="#333" stroke-width="0.9"/><path d="M715 468L718 471" stroke="#333" stroke-width="1"/></svg>
<div class="fld" style="left:594px;top:464px;width:44px;height:13px;"></div><span class="t" style="left:597px;top:466.8px;">0</span>
<div style="left:640px;top:464px;width:6px;height:13px;background:#bdbdbd;border:1px solid;border-color:#ececec #8a8a8a #8a8a8a #ececec"></div><svg style="left:640px;top:464px" width="6" height="13"><path d="M0.8 5.3L3.0 2.7L5.2 5.3ZM0.8 7.7L3.0 10.3L5.2 7.7Z" fill="#111"/><path d="M1 6.5H5" stroke="#9a9a9a" stroke-width="0.5"/></svg>
<div style="left:268px;top:117px;width:213px;height:98px;background:#ededed;border:1px solid #d4d4d4;box-shadow:0 0 2px rgba(0,0,0,0.25)"></div>
<div style="left:445px;top:117px;width:32px;height:15px;background:#bebebe"></div>
<svg style="left:445px;top:117px" width="32" height="15"><path d="M13 4.5L19 10.5M19 4.5L13 10.5" stroke="#fff" stroke-width="1.3"/></svg>
<div style="left:414px;top:126.5px;width:6px;height:1.5px;background:#222"></div>
<div style="left:432px;top:122px;width:8px;height:7px;border:1px solid #555;border-top-width:2px"></div>
<svg style="left:274px;top:121px" width="14" height="14"><rect x="0.5" y="0.5" width="12" height="12" rx="2" fill="#3c5060" stroke="#24323c"/><rect x="1.5" y="1.5" width="10" height="4" rx="1" fill="#6a8090" opacity="0.6"/><path d="M9 4.5A3.3 3.3 0 1 0 9.5 8M6.5 5.5H9.2V3" stroke="#f4f4f4" stroke-width="1.3" fill="none"/></svg>
<span style="left:292px;top:122.8px;font-size:10.3px;line-height:12px;color:#2a2a2a;white-space:nowrap">Scale Transform Type-In</span>
<div style="left:273px;top:139px;width:204px;height:71px;background:#b8b8b8"></div>
<div style="left:278px;top:149px;width:95px;height:57px;border:1px solid #8c8c8c;box-shadow:1px 1px 0 #d4d4d4, inset 1px 1px 0 #d4d4d4;"></div><span class="t" style="left:283px;top:144.5px;padding:0 1px;background:#bababa">Absolute:Local</span>
<div style="left:378px;top:149px;width:94px;height:57px;border:1px solid #8c8c8c;box-shadow:1px 1px 0 #d4d4d4, inset 1px 1px 0 #d4d4d4;"></div><span class="t" style="left:382px;top:144.5px;padding:0 1px;background:#bababa">Offset:World</span>
<span class="t" style="left:288px;top:158.0px;">X:</span>
<div class="fld" style="left:298px;top:157px;width:56px;height:11px;"></div><span class="t" style="left:301px;top:158.8px;">100,0</span>
<div style="left:355px;top:157px;width:8px;height:11px;background:#bdbdbd;border:1px solid;border-color:#ececec #8a8a8a #8a8a8a #ececec"></div><svg style="left:355px;top:157px" width="8" height="11"><path d="M1.8 4.3L4.0 1.7L6.2 4.3ZM1.8 6.7L4.0 9.3L6.2 6.7Z" fill="#111"/><path d="M1 5.5H7" stroke="#9a9a9a" stroke-width="0.5"/></svg>
<span class="t" style="left:288px;top:173.0px;">Y:</span>
<div class="fld" style="left:298px;top:172px;width:56px;height:11px;"></div><span class="t" style="left:301px;top:173.8px;">100,0</span>
<div style="left:355px;top:172px;width:8px;height:11px;background:#bdbdbd;border:1px solid;border-color:#ececec #8a8a8a #8a8a8a #ececec"></div><svg style="left:355px;top:172px" width="8" height="11"><path d="M1.8 4.3L4.0 1.7L6.2 4.3ZM1.8 6.7L4.0 9.3L6.2 6.7Z" fill="#111"/><path d="M1 5.5H7" stroke="#9a9a9a" stroke-width="0.5"/></svg>
<span class="t" style="left:288px;top:188.0px;">Z:</span>
<div class="fld" style="left:298px;top:187px;width:56px;height:11px;"></div><span class="t" style="left:301px;top:188.8px;">300,0</span>
<div style="left:355px;top:187px;width:8px;height:11px;background:#bdbdbd;border:1px solid;border-color:#ececec #8a8a8a #8a8a8a #ececec"></div><svg style="left:355px;top:187px" width="8" height="11"><path d="M1.8 4.3L4.0 1.7L6.2 4.3ZM1.8 6.7L4.0 9.3L6.2 6.7Z" fill="#111"/><path d="M1 5.5H7" stroke="#9a9a9a" stroke-width="0.5"/></svg>
<span class="t" style="left:383px;top:158.0px;">%:</span>
<div class="fld" style="left:396px;top:157px;width:56px;height:11px;"></div><span class="t" style="left:399px;top:158.8px;">100,0</span>
<div style="left:453px;top:157px;width:8px;height:11px;background:#bdbdbd;border:1px solid;border-color:#ececec #8a8a8a #8a8a8a #ececec"></div><svg style="left:453px;top:157px" width="8" height="11"><path d="M1.8 4.3L4.0 1.7L6.2 4.3ZM1.8 6.7L4.0 9.3L6.2 6.7Z" fill="#111"/><path d="M1 5.5H7" stroke="#9a9a9a" stroke-width="0.5"/></svg>
</body></html>
